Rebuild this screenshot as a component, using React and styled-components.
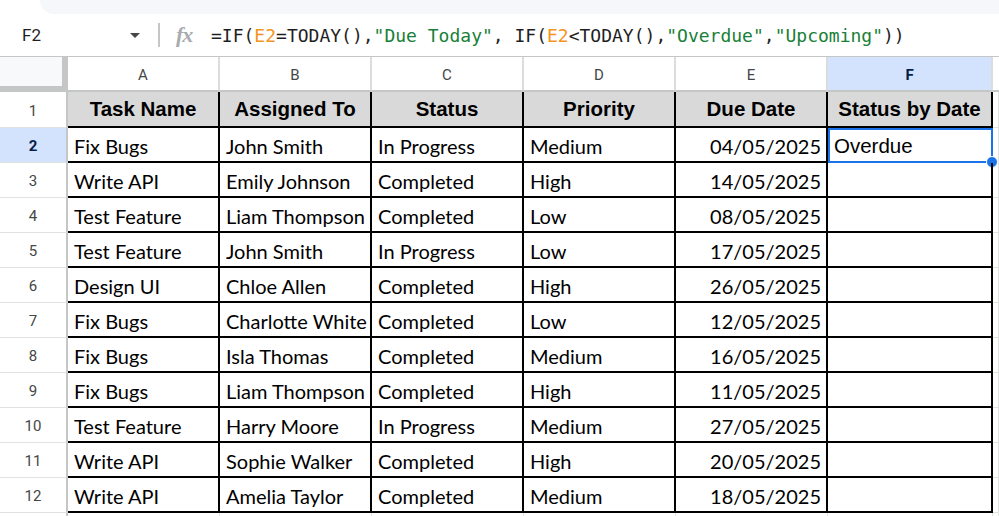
import React from 'react';
import styled, { createGlobalStyle } from 'styled-components';

const GlobalStyle = createGlobalStyle`
  html, body {
    margin: 0;
    padding: 0;
    background: #ffffff;
    overflow: hidden;
  }
  * {
    box-sizing: border-box;
  }
`;

const Page = styled.div`
  width: 999px;
  height: 516px;
  display: flex;
  flex-direction: column;
  overflow: hidden;
  background: #ffffff;
`;

const TopBand = styled.div`
  flex-shrink: 0;
  height: 14px;
  margin-left: 40px;
  background: #f5f7fb;
  border-bottom-left-radius: 14px;
`;

const FormulaBar = styled.div`
  flex-shrink: 0;
  height: 43px;
  display: flex;
  align-items: center;
  border-bottom: 1px solid #c4c7c5;
`;

const NameBox = styled.div`
  width: 158px;
  height: 100%;
  display: flex;
  align-items: center;
  justify-content: space-between;
  padding: 0 18px 0 22px;
  font-family: Roboto, "Liberation Sans", sans-serif;
  font-size: 17px;
  color: #1f1f1f;
`;

const Caret = styled.span`
  width: 0;
  height: 0;
  border-left: 5px solid transparent;
  border-right: 5px solid transparent;
  border-top: 5px solid #444746;
`;

const Divider = styled.span`
  width: 2px;
  height: 24px;
  background: #c4c7c5;
`;

const Fx = styled.span`
  margin-left: 16px;
  width: 22px;
  font-family: "Liberation Serif", serif;
  font-style: italic;
  font-weight: 700;
  font-size: 22px;
  color: #a8abaf;
  letter-spacing: -1px;
`;

const Formula = styled.div`
  margin-left: 13px;
  font-family: "DejaVu Sans Mono", monospace;
  font-size: 18px;
  color: #1f1f1f;
  white-space: pre;
`;

const Ref = styled.span`
  color: #f4941f;
`;

const Str = styled.span`
  color: #188038;
`;

const Sheet = styled.div`
  flex-shrink: 0;
  display: grid;
  grid-template-columns: 68px repeat(5, 152px) 165px 1fr;
  grid-template-rows: 35px 36px repeat(12, 35px);
`;

const Corner = styled.div`
  background: #f8f9fa;
  border-right: 6px solid #c4c7c5;
  border-bottom: 6px solid #c4c7c5;
`;

const ColHead = styled.div`
  display: flex;
  align-items: center;
  justify-content: center;
  padding-top: 2px;
  font-family: Roboto, "Liberation Sans", sans-serif;
  font-size: 15px;
  font-weight: ${(p) => (p.$active ? 700 : 400)};
  color: ${(p) => (p.$active ? '#041e49' : '#444746')};
  background: ${(p) => (p.$active ? '#d3e3fd' : '#ffffff')};
  border-right: ${(p) => (p.$last ? 'none' : '2px solid #dadce0')};
  border-bottom: 2px solid #c4c7c5;
`;

const RowHead = styled.div`
  display: flex;
  align-items: center;
  justify-content: center;
  padding-top: 2px;
  font-family: Roboto, "Liberation Sans", sans-serif;
  font-size: 15px;
  font-weight: ${(p) => (p.$active ? 700 : 400)};
  color: ${(p) => (p.$active ? '#041e49' : '#444746')};
  background: ${(p) => (p.$active ? '#d3e3fd' : '#ffffff')};
  border-right: 2px solid #c4c7c5;
  border-bottom: 1px solid #e1e3e1;
`;

const HeadCell = styled.div`
  display: flex;
  align-items: flex-end;
  justify-content: center;
  padding: 0 2px 5px;
  background: #d9d9d9;
  font-family: "Liberation Sans", Arial, sans-serif;
  font-weight: 700;
  font-size: 20.5px;
  color: #000000;
  white-space: nowrap;
  overflow: hidden;
  border-right: 2px solid #000000;
  border-bottom: 2px solid #000000;
`;

const Cell = styled.div`
  position: relative;
  display: flex;
  align-items: flex-end;
  justify-content: ${(p) => (p.$right ? 'flex-end' : 'flex-start')};
  padding: 0 5px 3px 6px;
  font-family: ${(p) => (p.$arial ? '"Liberation Sans", Arial, sans-serif' : 'Lato, "Open Sans", sans-serif')};
  font-size: ${(p) => (p.$arial ? '20.5px' : '20px')};
  color: #000000;
  white-space: nowrap;
  border-right: 2px solid #000000;
  border-bottom: 2px solid #000000;
`;

const EmptyCell = styled.div`
  border-right: 1px solid #e1e3e1;
  border-bottom: 1px solid #e1e3e1;
`;

const Selection = styled.div`
  position: absolute;
  top: 0;
  left: 0;
  right: -2px;
  bottom: -2px;
  border: 2px solid #1a73e8;
  pointer-events: none;
`;

const Handle = styled.span`
  position: absolute;
  right: -7px;
  bottom: -7px;
  width: 12px;
  height: 12px;
  border-radius: 50%;
  background: #1a73e8;
  border: 1px solid #ffffff;
`;

const letters = ['A', 'B', 'C', 'D', 'E', 'F'];
const headers = ['Task Name', 'Assigned To', 'Status', 'Priority', 'Due Date', 'Status by Date'];

const rows = [
  ['Fix Bugs', 'John Smith', 'In Progress', 'Medium', '04/05/2025', 'Overdue'],
  ['Write API', 'Emily Johnson', 'Completed', 'High', '14/05/2025', ''],
  ['Test Feature', 'Liam Thompson', 'Completed', 'Low', '08/05/2025', ''],
  ['Test Feature', 'John Smith', 'In Progress', 'Low', '17/05/2025', ''],
  ['Design UI', 'Chloe Allen', 'Completed', 'High', '26/05/2025', ''],
  ['Fix Bugs', 'Charlotte White', 'Completed', 'Low', '12/05/2025', ''],
  ['Fix Bugs', 'Isla Thomas', 'Completed', 'Medium', '16/05/2025', ''],
  ['Fix Bugs', 'Liam Thompson', 'Completed', 'High', '11/05/2025', ''],
  ['Test Feature', 'Harry Moore', 'In Progress', 'Medium', '27/05/2025', ''],
  ['Write API', 'Sophie Walker', 'Completed', 'High', '20/05/2025', ''],
  ['Write API', 'Amelia Taylor', 'Completed', 'Medium', '18/05/2025', ''],
];

export default function App() {
  return (
    <Page>
      <GlobalStyle />
      <TopBand />
      <FormulaBar>
        <NameBox>
          F2
          <Caret />
        </NameBox>
        <Divider />
        <Fx>fx</Fx>
        <Formula>
          =IF(<Ref>E2</Ref>=TODAY(),<Str>"Due Today"</Str>, IF(<Ref>E2</Ref>&lt;TODAY(),<Str>"Overdue"</Str>,<Str>"Upcoming"</Str>))
        </Formula>
      </FormulaBar>

      <Sheet>
        <Corner />
        {letters.map((l) => (
          <ColHead key={l} $active={l === 'F'}>{l}</ColHead>
        ))}
        <ColHead $last />

        <RowHead>1</RowHead>
        {headers.map((h) => (
          <HeadCell key={h}>{h}</HeadCell>
        ))}
        <EmptyCell />

        {rows.map((r, i) => (
          <React.Fragment key={i}>
            <RowHead $active={i === 0}>{i + 2}</RowHead>
            {r.map((v, j) => (
              <Cell key={j} $right={j === 4} $arial={j === 5}>
                {v}
                {i === 0 && j === 5 && (
                  <Selection>
                    <Handle />
                  </Selection>
                )}
              </Cell>
            ))}
            <EmptyCell />
          </React.Fragment>
        ))}

        <RowHead />
        {letters.map((l) => (
          <EmptyCell key={l} />
        ))}
        <EmptyCell />
      </Sheet>
    </Page>
  );
}
